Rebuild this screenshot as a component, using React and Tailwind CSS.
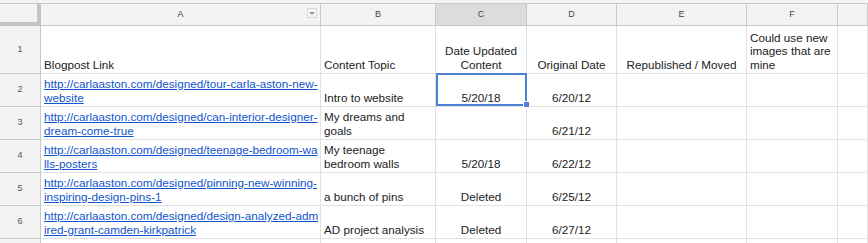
const cols = ['A', 'B', 'C', 'D', 'E', 'F', ''];

const rows = [
  {
    n: 2,
    link: ['http://carlaaston.com/designed/tour-carla-aston-new-', 'website'],
    topic: ['Intro to website'],
    updated: '5/20/18',
    original: '6/20/12',
  },
  {
    n: 3,
    link: ['http://carlaaston.com/designed/can-interior-designer-', 'dream-come-true'],
    topic: ['My dreams and', 'goals'],
    updated: '',
    original: '6/21/12',
  },
  {
    n: 4,
    link: ['http://carlaaston.com/designed/teenage-bedroom-wa', 'lls-posters'],
    topic: ['My teenage', 'bedroom walls'],
    updated: '5/20/18',
    original: '6/22/12',
  },
  {
    n: 5,
    link: ['http://carlaaston.com/designed/pinning-new-winning-', 'inspiring-design-pins-1'],
    topic: ['a bunch of pins'],
    updated: 'Deleted',
    original: '6/25/12',
  },
  {
    n: 6,
    link: ['http://carlaaston.com/designed/design-analyzed-adm', 'ired-grant-camden-kirkpatrick'],
    topic: ['AD project analysis'],
    updated: 'Deleted',
    original: '6/27/12',
  },
];

const cell = 'border-r border-b border-[#e2e2e2] flex flex-col justify-end px-[3px] pb-[2px] overflow-hidden whitespace-nowrap';
const rowHead = 'border-r border-b border-[#c8c8c8] bg-[#f3f3f3] flex items-center justify-center text-[9px] text-[#555]';

const Lines = ({ lines }) => lines.map((l, i) => <div key={i}>{l}</div>);

const FilterIcon = () => (
  <div className="absolute right-[3px] top-[4px] w-[10px] h-[10px] border border-[#dadada] bg-[#f8f8f8] flex items-center justify-center">
    <div className="w-0 h-0 border-l-[3px] border-r-[3px] border-t-[3px] border-l-transparent border-r-transparent border-t-[#9a9a9a]" />
  </div>
);

export default function App() {
  return (
    <div
      className="w-[868px] h-[243px] overflow-hidden bg-white text-[#222] text-[11.7px] leading-[13.5px]"
      style={{ fontFamily: '"Liberation Sans", Arial, sans-serif' }}
    >
      {/* toolbar edge */}
      <div className="h-[4px] bg-[#f3f3f3] border-b border-[#c8c8c8]" />

      <div className="grid grid-cols-[41px_280px_115px_91px_90px_130px_91px_1fr] grid-rows-[22px_48px_33px_33px_33px_33px_33px_20px]">
        {/* column headers */}
        <div className="bg-[#f3f3f3] border-r-4 border-b-4 border-[#c4c4c4]" />
        {cols.map((c, i) => (
          <div
            key={i}
            className={`relative border-r border-b border-[#c8c8c8] flex items-center justify-center text-[9px] text-[#444] ${c === 'C' ? 'bg-[#dcdcdc]' : 'bg-[#f3f3f3]'}`}
          >
            {c}
            {c === 'A' && <FilterIcon />}
          </div>
        ))}

        {/* row 1 */}
        <div className={rowHead}>1</div>
        <div className={cell}>Blogpost Link</div>
        <div className={cell}>Content Topic</div>
        <div className={`${cell} text-center`}>
          <Lines lines={['Date Updated', 'Content']} />
        </div>
        <div className={`${cell} text-center`}>Original Date</div>
        <div className={`${cell} text-center`}>Republished / Moved</div>
        <div className={cell}>
          <Lines lines={['Could use new', 'images that are', 'mine']} />
        </div>
        <div className={cell} />

        {rows.map((r) => (
          <div key={r.n} className="contents">
            <div className={`${rowHead} ${r.n === 2 ? 'bg-[#dcdcdc]' : ''}`}>{r.n}</div>
            <div className={`${cell} text-[#1155cc] underline`}>
              <Lines lines={r.link} />
            </div>
            <div className={cell}>
              <Lines lines={r.topic} />
            </div>
            <div className={`${cell} text-center ${r.n === 2 ? 'relative overflow-visible' : ''}`}>
              {r.updated}
              {r.n === 2 && (
                <>
                  <div className="absolute left-0 -top-[1px] w-[91px] h-[33px] border-2 border-[#4d7fd6] pointer-events-none" />
                  <div className="absolute left-[87px] top-[27px] w-[7px] h-[7px] bg-[#4d7fd6] border border-white" />
                </>
              )}
            </div>
            <div className={`${cell} text-center`}>{r.original}</div>
            <div className={cell} />
            <div className={cell} />
            <div className={cell} />
          </div>
        ))}

        {/* row 7 (cut off) */}
        <div className={rowHead} />
        {cols.map((c, i) => (
          <div key={i} className="border-r border-[#e2e2e2]" />
        ))}
      </div>
    </div>
  );
}
